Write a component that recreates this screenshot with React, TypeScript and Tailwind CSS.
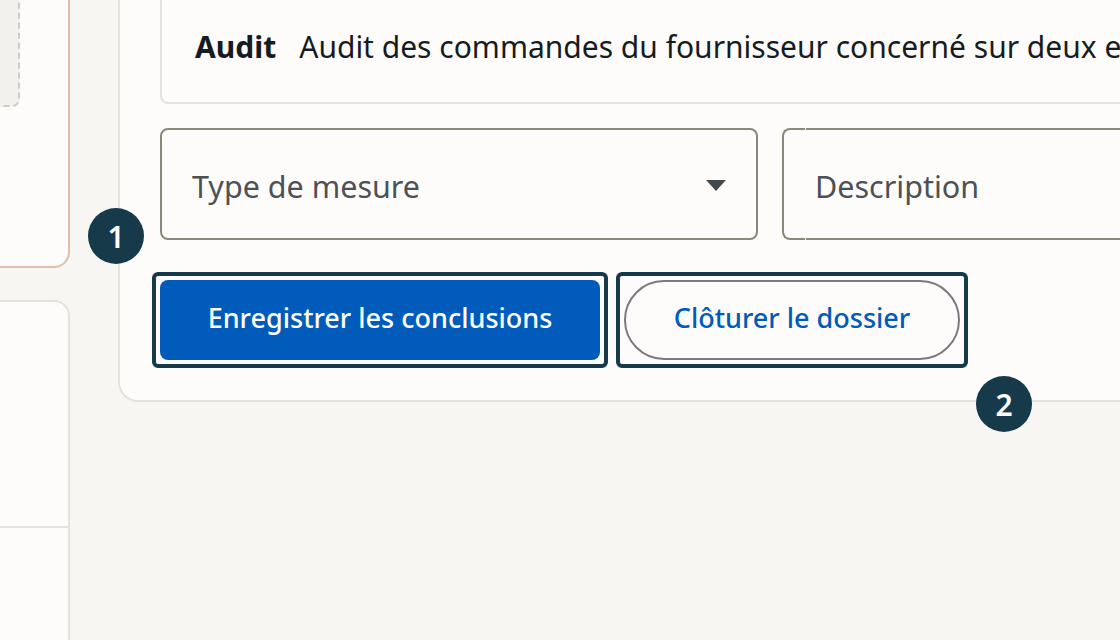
const font = { fontFamily: '"Noto Sans", "Liberation Sans", sans-serif' };

function Badge({ n, className }: { n: number; className: string }) {
  return (
    <span className={`absolute flex h-[56px] w-[56px] items-center justify-center rounded-full bg-[#163a4a] text-[30px] font-semibold text-white ${className}`}>
      {n}
    </span>
  );
}

function LeftColumn() {
  return (
    <div className="-ml-[300px] flex w-[370px] shrink-0 flex-col gap-[32px]">
      <div className="h-[268px] shrink-0 rounded-b-[16px] border-2 border-t-0 border-[#e3bdb2] bg-[#fdfcfa] pr-[48px]">
        <div className="h-[107px] rounded-b-[8px] border-2 border-t-0 border-dashed border-[#cfccc6] bg-[#f3f1ed]" />
      </div>
      <div className="h-[400px] shrink-0 rounded-t-[16px] border-2 border-b-0 border-[#e4e2dd] bg-[#fdfcfa]">
        <div className="mt-[224px] h-[2px] bg-[#e4e2dd]" />
      </div>
    </div>
  );
}

function TypeSelect() {
  return (
    <div className="flex h-[112px] w-[598px] shrink-0 items-center justify-between rounded-[8px] border-2 border-[#8a8878] px-[30px]">
      <span className="pt-[6px] text-[30.5px] text-[#4d5156]">Type de mesure</span>
      <span className="mt-[2px] h-0 w-0 border-x-[10px] border-t-[11px] border-x-transparent border-t-[#44474c]" />
    </div>
  );
}

function DescriptionField() {
  return (
    <div className="flex h-[112px] w-[500px] shrink-0 gap-[1px]">
      <div className="w-[23px] shrink-0 rounded-l-[8px] border-y-2 border-l-2 border-[#8a8878]" />
      <div className="flex flex-1 items-center border-y-2 border-[#8a8878] pl-[9px]">
        <span className="pt-[6px] text-[30.5px] text-[#4d5156]">Description</span>
      </div>
    </div>
  );
}

function FocusBox({ children }: { children: React.ReactNode }) {
  return <div className="shrink-0 rounded-[6px] border-4 border-[#163a4a] p-[4px]">{children}</div>;
}

export default function App() {
  return (
    <div style={font} className="relative flex h-[640px] w-[1120px] gap-[48px] overflow-hidden bg-[#f7f6f3]">
      <LeftColumn />
      <main className="flex h-[402px] w-[1200px] shrink-0 flex-col rounded-bl-[20px] border-b-2 border-l-2 border-[#e4e2dd] bg-[#fdfcfa] pl-[40px]">
        <div className="flex h-[104px] items-center gap-[23px] whitespace-nowrap rounded-bl-[8px] border-b-2 border-l-2 border-[#e4e2dd] pb-[10px] pl-[33px] text-[30px] text-[#161b1f]">
          <strong className="font-bold">Audit</strong>
          <span>Audit des commandes du fournisseur concerné sur deux exercices</span>
        </div>
        <div className="mt-[24px] flex gap-[24px]">
          <TypeSelect />
          <DescriptionField />
        </div>
        <div className="-ml-[8px] mt-[32px] flex gap-[8px]">
          <FocusBox>
            <button className="block h-[80px] w-[440px] rounded-[8px] bg-[#005bbb] pb-[4px] text-[27px] font-medium text-white">
              Enregistrer les conclusions
            </button>
          </FocusBox>
          <FocusBox>
            <button className="block h-[80px] w-[336px] rounded-full border-2 border-[#7c7a80] pb-[4px] text-[27px] font-medium text-[#005bbb]">
              Clôturer le dossier
            </button>
          </FocusBox>
        </div>
      </main>
      <Badge n={1} className="left-[88px] top-[208px]" />
      <Badge n={2} className="left-[976px] top-[376px]" />
    </div>
  );
}
